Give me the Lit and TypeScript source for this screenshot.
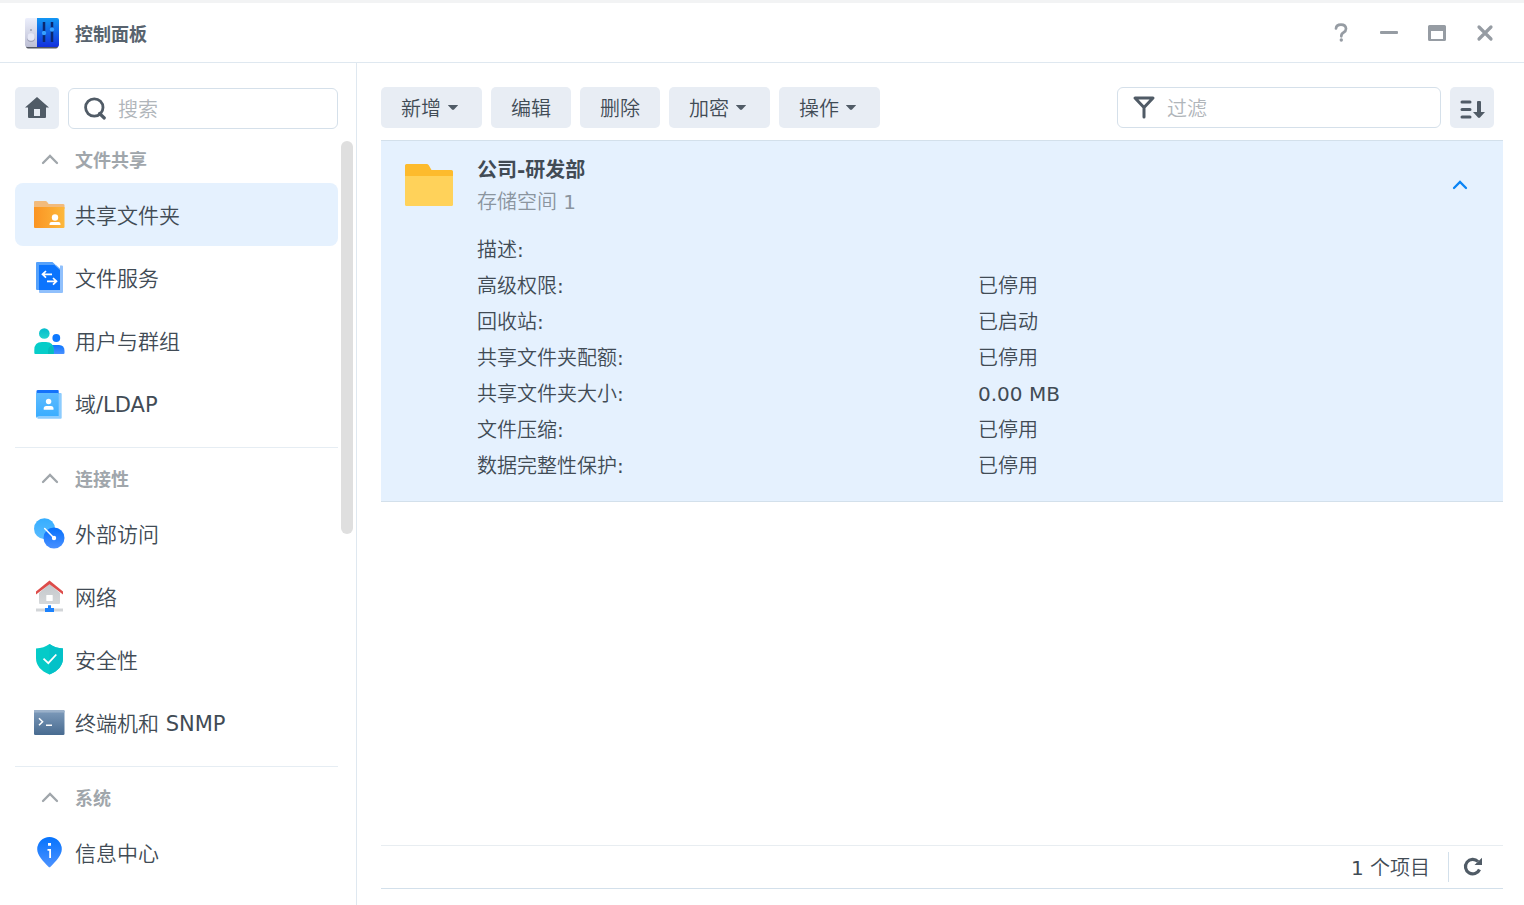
import { LitElement, html, svg, css, nothing, TemplateResult } from "lit";
import { customElement, state } from "lit/decorators.js";
import { classMap } from "lit/directives/class-map.js";

interface NavItem {
  id: string;
  label: string;
  icon: TemplateResult;
}

interface NavGroup {
  title: string;
  items: NavItem[];
}

const sharedFolderIcon = svg`
  <defs><linearGradient id="sf" x1="0" x2="1"><stop offset="0" stop-color="#fa9423"/><stop offset="1" stop-color="#fdb83c"/></linearGradient></defs>
  <path d="M1 10V3q0-1 1-1h10.500q1 0 1.500.700l1.700 2.300h14.300q1.500 0 1.500 1V10z" fill="#f2bb7c"/>
  <path d="M1 8h30.500v20q0 1-1 1H2q-1 0-1-1z" fill="url(#sf)"/>
  <circle cx="22" cy="18.500" r="3.200" fill="#fff"/>
  <path d="M16.500 26v-1q0-2 2-2h7q2 0 2 2v1z" fill="#fff"/>`;

const fileServiceIcon = svg`
  <path d="M4 0h15.500L27 7v21H4q-1 0-1-1V1q0-1 1-1z" fill="#55a1fb"/>
  <path d="M6 3h17l4 3.500V3.500h2q1 0 1 1V30q0 1-1 1H7q-1 0-1-1z" fill="#7db5fb" opacity=".85"/>
  <path d="M6 3h15.500l5.500 5V28H6z" fill="#0b74fd"/>
  <path d="M19 12.300h-9M13 9l-3.500 3.300L13 15.600M14 19.300h9M20 16l3.500 3.300L20 22.600" fill="none" stroke="#fff" stroke-width="1.700"/>`;

const usersIcon = svg`
  <defs><linearGradient id="ug" x2="0" y2="1"><stop offset="0" stop-color="#05bccd"/><stop offset="1" stop-color="#23d4cd"/></linearGradient>
  <linearGradient id="ub" x2="0" y2="1"><stop offset="0" stop-color="#0c76ff"/><stop offset="1" stop-color="#4a90ff"/></linearGradient></defs>
  <circle cx="11.300" cy="8.500" r="5.300" fill="url(#ug)"/>
  <circle cx="23.300" cy="13" r="3.900" fill="#0d79ff"/>
  <path d="M15 29v-6q1-3 4-3h7q5.500 0 5.500 6v2q0 1-1 1z" fill="url(#ub)"/>
  <path d="M1.300 28v-3q0-8 7.700-8h4q7.700 0 7.700 8v4H2.300q-1 0-1-1z" fill="#06cdc9"/>
  <path d="M15 29v-3q0-4 3.500-5.500 2.200 2 2.200 5V29z" fill="#05bdbd"/>`;

const ldapIcon = svg`
  <defs><linearGradient id="ld" x2="0" y2="1"><stop offset="0" stop-color="#62bdff"/><stop offset="1" stop-color="#38acff"/></linearGradient></defs>
  <path d="M6 5h21.700q1 0 1 1v23.700q0 1-1 1H4.500z" fill="#8dccfe"/>
  <path d="M5 2h20q.700 0 .700 1v3H3.500V3q0-1 1.500-1z" fill="#1472fb"/>
  <path d="M3 3.500Q3 5 4.500 5h21.200v23H6q-1.500 0-2 2-1-.500-1-2z" fill="url(#ld)"/>
  <circle cx="15.600" cy="13.500" r="2.700" fill="#fff"/>
  <path d="M10.700 21.700v-1.200q0-2.500 2.500-2.500h4.800q2.500 0 2.500 2.500v1.200z" fill="#fff"/>`;

const externalIcon = svg`
  <defs><linearGradient id="ea" x2="0" y2="1"><stop offset="0" stop-color="#35adff"/><stop offset="1" stop-color="#5abcff"/></linearGradient>
  <linearGradient id="eb" x2="0" y2="1"><stop offset="0" stop-color="#0570fc"/><stop offset="1" stop-color="#4a90ff"/></linearGradient></defs>
  <circle cx="11.500" cy="10.700" r="10.500" fill="url(#ea)"/>
  <circle cx="21" cy="20" r="10.500" fill="url(#eb)"/>
  <path d="M11.700 10.500L21 20" stroke="#fff" stroke-width="1.500" stroke-linecap="round"/>
  <circle cx="21" cy="20" r="2.200" fill="#fff"/>`;

const networkIcon = svg`
  <defs><linearGradient id="nw" x2="0" y2="1"><stop offset="0" stop-color="#c3c7cb"/><stop offset="1" stop-color="#d5d8da"/></linearGradient></defs>
  <path d="M16.500 3L27 12v10q0 1-1 1H7q-1 0-1-1V12z" fill="url(#nw)"/>
  <path d="M3 10.500L16.500 -.500 30 10.500v3L16.500 3.200 3 13.500z" fill="#dd4c4a"/>
  <rect x="13.300" y="14" width="6.400" height="6" rx=".500" fill="#fff"/>
  <path d="M3 27.500h27v3H3z" fill="#d2d5d8"/>
  <path d="M15 24.300h3V27h3v4h-9v-4h3z" fill="#1b82fd"/>`;

const securityIcon = svg`
  <path d="M16.500 0Q22 4 30 4.500V14q0 11-13.500 16.500Q3 25 3 14V4.500Q11 4 16.500 0z" fill="#05cbc8"/>
  <path d="M16.500 0Q22 4 30 4.500V14q0 11-13.500 16.500z" fill="#04c1c8"/>
  <path d="M10.500 14.700l4.800 4.500 8-8.700" fill="none" stroke="#fff" stroke-width="1.800"/>`;

const terminalIcon = svg`
  <defs><linearGradient id="tm" x2="0" y2="1"><stop offset="0" stop-color="#7f9cbc"/><stop offset="1" stop-color="#486b90"/></linearGradient></defs>
  <rect x="1" y="3" width="30.500" height="25" rx="1.200" fill="url(#tm)"/>
  <path d="M2 3h28.500q1 0 1 1v1.500H1V4q0-1 1-1z" fill="#9bb1ca"/>
  <path d="M6 11.300l3.600 3.500L6 18.300M13 18.300h6" fill="none" stroke="#fff" stroke-width="1.500"/>`;

const infoIcon = svg`
  <defs><linearGradient id="inf" x2="0" y2="1"><stop offset="0" stop-color="#0573fd"/><stop offset="1" stop-color="#4c92ff"/></linearGradient></defs>
  <path d="M16.500 0a12.300 12.300 0 0 1 12.300 12.300c0 6-6 12-11.300 17.500q-1 1-2 0C10.200 24.300 4.200 18.300 4.200 12.300A12.300 12.300 0 0 1 16.500 0z" fill="url(#inf)"/>
  <path d="M15 6h3v2.700h-3zM14.500 12H18v9h-1.800v-7.300h-1.700z" fill="#fff"/>`;

const groups: NavGroup[] = [
  {
    title: "文件共享",
    items: [
      { id: "share", label: "共享文件夹", icon: sharedFolderIcon },
      { id: "file", label: "文件服务", icon: fileServiceIcon },
      { id: "user", label: "用户与群组", icon: usersIcon },
      { id: "ldap", label: "域/LDAP", icon: ldapIcon },
    ],
  },
  {
    title: "连接性",
    items: [
      { id: "external", label: "外部访问", icon: externalIcon },
      { id: "network", label: "网络", icon: networkIcon },
      { id: "security", label: "安全性", icon: securityIcon },
      { id: "terminal", label: "终端机和 SNMP", icon: terminalIcon },
    ],
  },
  {
    title: "系统",
    items: [{ id: "info", label: "信息中心", icon: infoIcon }],
  },
];

const actions = [
  { label: "新增", menu: true },
  { label: "编辑", menu: false },
  { label: "删除", menu: false },
  { label: "加密", menu: true },
  { label: "操作", menu: true },
];

const details: [string, string][] = [
  ["描述:", ""],
  ["高级权限:", "已停用"],
  ["回收站:", "已启动"],
  ["共享文件夹配额:", "已停用"],
  ["共享文件夹大小:", "0.00 MB"],
  ["文件压缩:", "已停用"],
  ["数据完整性保护:", "已停用"],
];

/* Chinese runs are set light; Latin runs inside them keep the regular weight. */
const mixed = (text: string) =>
  (text.match(/[\x00-\x7f]+|[^\x00-\x7f]+/g) ?? []).map((run) =>
    run.charCodeAt(0) < 128 ? html`<span class="latin">${run}</span>` : run
  );

const base = css`
  * {
    box-sizing: border-box;
  }
  button,
  input {
    font: inherit;
    color: inherit;
    border: 0;
    margin: 0;
    padding: 0;
    background: none;
  }
  svg {
    display: block;
    flex: none;
    overflow: visible;
  }
  .latin {
    font-weight: 400;
  }
`;

@customElement("control-sidebar")
export class ControlSidebar extends LitElement {
  @state() private selected = "share";

  static styles = [
    base,
    css`
      :host {
        display: flex;
        flex-direction: column;
        min-height: 0;
        border-right: 1px solid #dfe8f0;
        padding: 24px 0 0 15px;
      }
      .tools {
        display: flex;
        align-items: flex-end;
        gap: 9px;
        padding-right: 18px;
      }
      .home {
        display: grid;
        place-items: center;
        flex: none;
        width: 44px;
        height: 42px;
        border-radius: 5px;
        background: #e8edf4;
      }
      .search {
        display: flex;
        align-items: center;
        flex: 1;
        min-width: 0;
        gap: 12px;
        height: 41px;
        padding-left: 15px;
        border: 1px solid #d5e0ea;
        border-radius: 6px;
      }
      .search input {
        flex: 1;
        min-width: 0;
        height: 100%;
        padding-top: 2px;
        font-size: 20px;
        outline: none;
      }
      .search input::placeholder {
        color: #b0b5ba;
        opacity: 1;
      }
      .body {
        display: flex;
        flex: 1;
        min-height: 0;
        gap: 3px;
        padding-right: 3px;
      }
      nav {
        flex: 1;
        min-width: 0;
        overflow: hidden;
        padding-top: 6px;
      }
      .track {
        width: 12px;
        padding: 12px 0 8px;
      }
      .thumb {
        height: 52%;
        border-radius: 6px;
        background: #dfdfdf;
      }
      .group + .group {
        margin-top: 12px;
        padding-top: 6px;
        border-top: 1px solid #e6edf3;
      }
      .heading {
        display: flex;
        align-items: center;
        gap: 16px;
        width: 100%;
        height: 48px;
        padding-left: 26px;
        font-size: 18px;
        font-weight: 700;
        color: #a0a6ab;
      }
      .item {
        display: flex;
        align-items: center;
        gap: 10px;
        height: 63px;
        padding: 1px 18px 0;
        border-radius: 8px;
        color: #414b55;
        font-size: 21px;
        text-decoration: none;
        white-space: nowrap;
      }
      .label {
        padding-bottom: 3px;
      }
      .selected {
        background: #e5f1fe;
      }
    `,
  ];

  private pick(event: Event, id: string) {
    event.preventDefault();
    this.selected = id;
  }

  render() {
    return html`
      <div class="tools">
        <button class="home" aria-label="主页">
          <svg width="24" height="22" viewBox="0 0 24 22">
            <path d="M12 0l12 10.500h-3V20q0 1-1 1H4q-1 0-1-1v-9.500H0zM9 12v7h6v-7z" fill="#505b66" fill-rule="evenodd" />
          </svg>
        </button>
        <label class="search">
          <svg width="22" height="23" viewBox="0 0 22 23" fill="none" stroke="#505b66">
            <circle cx="10.300" cy="10.500" r="8.700" stroke-width="2.800" />
            <path d="M15.500 16.500l4.800 4.500" stroke-width="3.200" stroke-linecap="round" />
          </svg>
          <input type="text" placeholder="搜索" aria-label="搜索" />
        </label>
      </div>
      <div class="body">
        <nav>
          ${groups.map(
            (group) => html`
              <div class="group">
                <button class="heading" aria-expanded="true">
                  <svg width="18" height="12" viewBox="0 0 18 12">
                    <path d="M2 10l7-7 7 7" fill="none" stroke="#a0a6ab" stroke-width="2.300" stroke-linecap="round" />
                  </svg>
                  <span>${group.title}</span>
                </button>
                ${group.items.map(
                  (item) => html`
                    <a
                      href="#${item.id}"
                      class=${classMap({ item: true, selected: item.id === this.selected })}
                      @click=${(e: Event) => this.pick(e, item.id)}
                    >
                      <svg width="32" height="32" viewBox="0 0 32 32">${item.icon}</svg>
                      <span class="label">${mixed(item.label)}</span>
                    </a>
                  `
                )}
              </div>
            `
          )}
        </nav>
        <div class="track"><div class="thumb"></div></div>
      </div>
    `;
  }
}

@customElement("shared-folders")
export class SharedFolders extends LitElement {
  @state() private open = true;

  static styles = [
    base,
    css`
      :host {
        display: flex;
        flex-direction: column;
        min-width: 0;
        padding: 24px 21px 16px 24px;
        font-size: 20px;
      }
      .toolbar {
        display: flex;
        gap: 9px;
        padding: 0 9px 12px 0;
      }
      .action {
        display: flex;
        align-items: center;
        gap: 7px;
        height: 41px;
        padding: 0 20px;
        border-radius: 5px;
        background: #e8edf4;
        white-space: nowrap;
      }
      .menu {
        padding-right: 24px;
      }
      .filter {
        display: flex;
        align-items: center;
        gap: 12px;
        width: 324px;
        height: 41px;
        margin-left: auto;
        padding-left: 15px;
        border: 1px solid #d5e0ea;
        border-radius: 6px;
      }
      .filter input {
        flex: 1;
        min-width: 0;
        height: 100%;
        padding-top: 2px;
        outline: none;
      }
      .filter input::placeholder {
        color: #b0b5ba;
        opacity: 1;
      }
      .sort {
        display: grid;
        place-items: center;
        flex: none;
        width: 44px;
        height: 41px;
        padding-top: 2px;
        border-radius: 5px;
        background: #e8edf4;
      }
      .list {
        flex: 1;
        border-top: 1px solid #d3e0eb;
      }
      .folder {
        padding: 11px 24px 17px;
        border-bottom: 1px solid #d3e0eb;
        background: #e5f1fe;
      }
      .summary {
        display: flex;
        align-items: center;
        gap: 24px;
      }
      .text {
        flex: 1;
      }
      .name {
        margin: 0;
        font-size: 20px;
        line-height: 36px;
        font-weight: 700;
      }
      .volume {
        margin: 0;
        line-height: 29px;
        color: #8b959f;
      }
      .toggle {
        display: grid;
        place-items: center;
        width: 38px;
        height: 38px;
      }
      dl {
        margin: 15px 0 0;
        padding-left: 72px;
      }
      .row {
        display: grid;
        grid-template-columns: 1fr 1fr;
        height: 36px;
        line-height: 36px;
      }
      dd {
        margin: 0;
      }
      .status {
        display: flex;
        align-items: center;
        justify-content: flex-end;
        height: 44px;
        border-top: 1px solid #e8edf1;
        border-bottom: 1px solid #d3e0eb;
      }
      .count {
        padding: 0 18px 1px 0;
      }
      .reload {
        display: grid;
        place-items: center;
        width: 55px;
        height: 30px;
        padding-right: 6px;
        border-left: 1px solid #d3e0eb;
      }
    `,
  ];

  render() {
    return html`
      <div class="toolbar">
        ${actions.map(
          (action) => html`
            <button class=${classMap({ action: true, menu: action.menu })}>
              <span>${action.label}</span>
              ${action.menu
                ? html`<svg width="10" height="5" viewBox="0 0 10 5"><path d="M.500 0h9q.500 0 .300.500L6 4.500q-1 .800-2 0L.200.500Q0 0 .500 0z" fill="#505b66" /></svg>`
                : nothing}
            </button>
          `
        )}
        <label class="filter">
          <svg width="22" height="23" viewBox="0 0 22 23" fill="none" stroke="#505b66" stroke-width="3" stroke-linejoin="round" stroke-linecap="round">
            <path d="M2 2h18l-9 9.500zM11 11.500V21" />
          </svg>
          <input type="text" placeholder="过滤" aria-label="过滤" />
        </label>
        <button class="sort" aria-label="排序">
          <svg width="25" height="20" viewBox="0 0 25 20">
            <path d="M2 3h8M2 10.500h8M2 18h8" stroke="#505b66" stroke-width="3" stroke-linecap="round" />
            <path d="M17 3q0-1 1-1h2q1 0 1 1v10h4l-5 5.500q-1 .800-2 0L13 13h4z" fill="#505b66" />
          </svg>
        </button>
      </div>
      <div class="list">
        <section class="folder">
          <div class="summary">
            <svg width="48" height="42" viewBox="0 0 48 42">
              <path d="M0 14V1.500Q0 0 1.500 0h20q1.500 0 2.300 1.200L26.500 6H46.500Q48 6 48 7.500V14z" fill="#fdbb2d" />
              <path d="M0 12h48v28.500q0 1.500-1.500 1.500h-45Q0 42 0 40.500z" fill="#ffd25a" />
            </svg>
            <div class="text">
              <h2 class="name">公司-研发部</h2>
              <p class="volume">${mixed("存储空间 1")}</p>
            </div>
            <button class="toggle" aria-label="详情" aria-expanded=${this.open} @click=${() => (this.open = !this.open)}>
              <svg width="16" height="10" viewBox="0 0 16 10">
                <path d="M2 8l6-6 6 6" fill="none" stroke="#0a84f5" stroke-width="2.300" stroke-linecap="round" />
              </svg>
            </button>
          </div>
          ${this.open
            ? html`<dl>
                ${details.map(([label, value]) => html`<div class="row"><dt>${mixed(label)}</dt><dd>${mixed(value)}</dd></div>`)}
              </dl>`
            : nothing}
        </section>
      </div>
      <footer class="status">
        <span class="count">${mixed("1 个项目")}</span>
        <button class="reload" aria-label="刷新">
          <svg width="20" height="20" viewBox="0 0 20 20">
            <path d="M16.500 12.500A7.300 7.300 0 1 1 15 4.500" fill="none" stroke="#505b66" stroke-width="3.200" />
            <path d="M19 .800V8h-7.500z" fill="#505b66" />
          </svg>
        </button>
      </footer>
    `;
  }
}

@customElement("app-root")
export class AppRoot extends LitElement {
  static styles = [
    base,
    css`
      :host {
        display: grid;
        grid-template-rows: auto minmax(0, 1fr);
        height: 100vh;
        background: #fff;
        color: #414b55;
        font-family: "DejaVu Sans", "Noto Sans CJK SC", sans-serif;
        font-weight: 350;
      }
      .titlebar {
        display: flex;
        align-items: center;
        gap: 16px;
        height: 63px;
        padding: 0 15px 0 25px;
        border-top: 3px solid #f2f3f4;
        border-bottom: 1px solid #dfe8f0;
      }
      .title {
        flex: 1;
        margin: 0;
        font-size: 18px;
        font-weight: 700;
        color: #58636e;
      }
      .controls {
        display: flex;
      }
      .control {
        display: grid;
        place-items: center;
        width: 48px;
        height: 40px;
      }
      .content {
        display: grid;
        grid-template-columns: 357px minmax(0, 1fr);
        min-height: 0;
      }
    `,
  ];

  render() {
    return html`
      <header class="titlebar">
        <svg width="34" height="30" viewBox="0 0 34 30">
          <defs>
            <linearGradient id="l" x2="0" y2="1"><stop offset="0" stop-color="#eceffc" /><stop offset="1" stop-color="#bdbfd4" /></linearGradient>
            <linearGradient id="r" x2="0" y2="1"><stop offset="0" stop-color="#1296f3" /><stop offset="1" stop-color="#1230dd" /></linearGradient>
          </defs>
          <rect x="1" y="2" width="32" height="28.500" rx="2" fill="#515560" />
          <path d="M2 0h10v29H2q-2 0-2-2V2q0-2 2-2z" fill="url(#l)" />
          <path d="M12 0h20q2 0 2 2v25q0 2-2 2H12z" fill="url(#r)" />
          <circle cx="6" cy="20" r="4" fill="#9da0b7" />
          <circle cx="6" cy="19" r="3.800" fill="#e6e8f6" />
          <circle cx="6" cy="12" r=".800" fill="#70758a" />
          <path d="M19 4v20M27 4v20" stroke="#0b2870" stroke-width="2.500" />
          <circle cx="19" cy="15" r="2.200" fill="#37a0ff" />
          <circle cx="27" cy="11.500" r="2.200" fill="#37a0ff" />
        </svg>
        <h1 class="title">控制面板</h1>
        <div class="controls">
          <button class="control" aria-label="帮助">
            <svg width="14" height="19" viewBox="0 0 14 19">
              <path d="M2 5.500Q2.300 1.700 7 1.700T12 5.700Q12 8 9.500 9.500 7.300 10.700 7.300 13.300" fill="none" stroke="#969ca3" stroke-width="2.700" stroke-linecap="round" />
              <circle cx="7.300" cy="17" r="1.700" fill="#969ca3" />
            </svg>
          </button>
          <button class="control" aria-label="最小化">
            <svg width="18" height="3" viewBox="0 0 18 3"><rect width="18" height="3" rx="1" fill="#969ca3" /></svg>
          </button>
          <button class="control" aria-label="最大化">
            <svg width="18" height="16" viewBox="0 0 18 16">
              <path d="M1.500 0h15Q18 0 18 1.500v13q0 1.500-1.500 1.500h-15Q0 16 0 14.500v-13Q0 0 1.500 0zM3 6v8h12V6z" fill="#969ca3" fill-rule="evenodd" />
            </svg>
          </button>
          <button class="control" aria-label="关闭">
            <svg width="16" height="16" viewBox="0 0 16 16">
              <path d="M2 2l12 12M14 2L2 14" stroke="#969ca3" stroke-width="3.200" stroke-linecap="round" />
            </svg>
          </button>
        </div>
      </header>
      <div class="content">
        <control-sidebar></control-sidebar>
        <shared-folders></shared-folders>
      </div>
    `;
  }
}
